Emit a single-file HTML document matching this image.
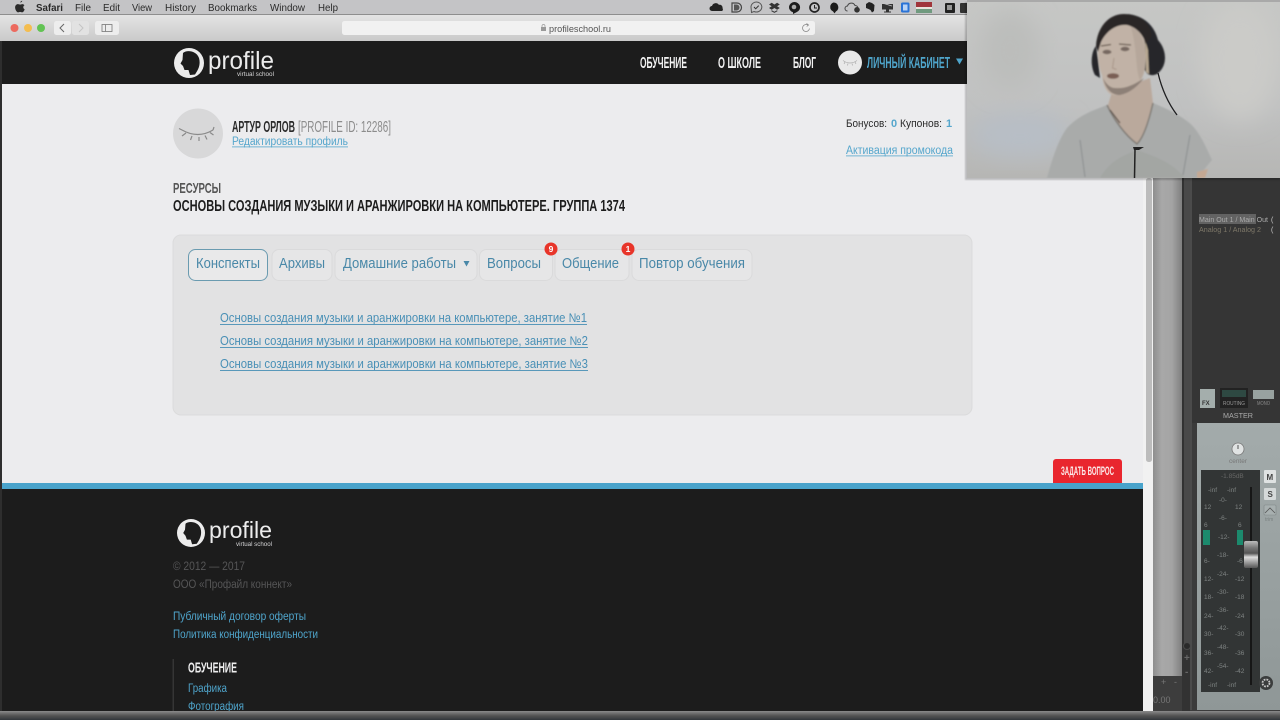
<!DOCTYPE html>
<html lang="ru">
<head>
<meta charset="utf-8">
<title>profileschool.ru</title>
<style>
html,body{margin:0;padding:0;width:1280px;height:720px;overflow:hidden;background:#3a3a3a}
svg{display:block;position:absolute;left:0;top:0}
text{font-family:"Liberation Sans",sans-serif}
</style>
</head>
<body>
<svg width="1280" height="720" viewBox="0 0 1280 720" xmlns="http://www.w3.org/2000/svg">
<defs>
<filter id="s" x="0" y="0" width="100%" height="100%"><feGaussianBlur stdDeviation="0.35"/></filter>
<filter id="b1" x="-20%" y="-20%" width="140%" height="140%"><feGaussianBlur stdDeviation="0.9"/></filter>
<filter id="b2" x="-30%" y="-30%" width="160%" height="160%"><feGaussianBlur stdDeviation="2.500"/></filter>
<filter id="b3" x="-30%" y="-30%" width="160%" height="160%"><feGaussianBlur stdDeviation="12"/></filter>
<linearGradient id="tb" x1="0" y1="0" x2="0" y2="1"><stop offset="0" stop-color="#e4e4e4"/><stop offset="1" stop-color="#c9c9c9"/></linearGradient>
<linearGradient id="col" x1="0" y1="0" x2="1" y2="0"><stop offset="0" stop-color="#8e8e8e"/><stop offset=".3" stop-color="#a8a8a8"/><stop offset=".65" stop-color="#a4a4a4"/><stop offset="1" stop-color="#7f7f7f"/></linearGradient>
<linearGradient id="wall" x1="0" y1="0" x2="0" y2="1"><stop offset="0" stop-color="#c6c7c5"/><stop offset=".6" stop-color="#c0c1c1"/><stop offset="1" stop-color="#b6b6b4"/></linearGradient>
<linearGradient id="panel" x1="0" y1="0" x2="0" y2="1"><stop offset="0" stop-color="#a3abab"/><stop offset="1" stop-color="#8f9797"/></linearGradient>
<linearGradient id="fad" x1="0" y1="0" x2="0" y2="1"><stop offset="0" stop-color="#bbb"/><stop offset=".25" stop-color="#777"/><stop offset=".45" stop-color="#555"/><stop offset=".6" stop-color="#ddd"/><stop offset="1" stop-color="#555"/></linearGradient>
<linearGradient id="bot" x1="0" y1="0" x2="0" y2="1"><stop offset="0" stop-color="#8b8b8b"/><stop offset=".5" stop-color="#555"/><stop offset="1" stop-color="#33373c"/></linearGradient>
<clipPath id="vid"><rect x="967" y="0" width="313" height="178"/></clipPath>
<clipPath id="foot"><rect x="0" y="489" width="1143" height="222"/></clipPath>
</defs>

<g filter="url(#s)">
<!-- desktop / mixer -->
<rect width="1280" height="720" fill="#3b3b3b"/>
<rect x="1153" y="178" width="29" height="498" fill="url(#col)"/>
<rect x="1153" y="676" width="29" height="36" fill="#3c3c3c"/>
<rect x="1182" y="178" width="8" height="534" fill="#333"/>
<rect x="1184" y="178" width="6" height="470" fill="#4a4a4a"/>
<rect x="1190" y="178" width="90" height="245" fill="#363636"/>
<rect x="1190" y="178" width="2" height="532" fill="#4c4c4c"/>
<rect x="1199" y="214" width="57" height="10" fill="#626262"/>
<text x="1199" y="222" font-size="7" fill="#aaa" textLength="69" lengthAdjust="spacingAndGlyphs">Main Out 1 / Main Out</text>
<text x="1199" y="232" font-size="7" fill="#7d7768" textLength="62" lengthAdjust="spacingAndGlyphs">Analog 1 / Analog 2</text>
<text x="1271" y="222" font-size="7" fill="#ccc">(</text>
<text x="1271" y="232" font-size="7" fill="#ccc">(</text>
<!-- channel buttons -->
<rect x="1200" y="389" width="15" height="19" fill="#a4aeac"/>
<text x="1202" y="405" font-size="6" font-weight="bold" fill="#333">FX</text>
<rect x="1220" y="388" width="28" height="20" fill="#222"/>
<rect x="1222" y="390" width="24" height="7" fill="#2f4a42"/>
<text x="1223" y="405" font-size="5" fill="#999" textLength="22" lengthAdjust="spacingAndGlyphs">ROUTING</text>
<rect x="1253" y="390" width="21" height="9" fill="#98a2a0"/>
<text x="1257" y="405" font-size="5" fill="#888" textLength="13" lengthAdjust="spacingAndGlyphs">MONO</text>
<text x="1223" y="418" font-size="7.5" fill="#aaa" textLength="30" lengthAdjust="spacingAndGlyphs">MASTER</text>
<!-- master panel -->
<rect x="1197" y="423" width="83" height="287" fill="url(#panel)"/>
<circle cx="1238" cy="449" r="6" fill="#e0e3e3" stroke="#777" stroke-width=".8"/>
<line x1="1238" y1="445" x2="1238" y2="449" stroke="#555"/>
<text x="1229" y="463" font-size="6.5" fill="#777" textLength="18" lengthAdjust="spacingAndGlyphs">center</text>
<rect x="1201" y="470" width="59" height="222" fill="#333635"/>
<rect x="1250" y="487" width="2" height="198" fill="#151515"/>
<rect x="1203" y="530" width="7" height="15" fill="#1f8a6d"/>
<rect x="1237" y="530" width="6" height="15" fill="#1f8a6d"/>
<rect x="1244" y="541" width="14" height="27" rx="2" fill="url(#fad)"/>
<g font-size="6.5" fill="#7d8282">
<text x="1221" y="478" fill="#666">-1.85dB</text>
<text x="1208" y="492">-inf</text><text x="1227" y="492">-inf</text>
<text x="1219" y="502">-0-</text>
<text x="1204" y="509">12</text><text x="1235" y="509">12</text>
<text x="1219" y="520">-6-</text>
<text x="1204" y="527">6</text><text x="1238" y="527">6</text>
<text x="1218" y="539">-12-</text>
<text x="1217" y="557">-18-</text>
<text x="1204" y="563">6-</text><text x="1237" y="563">-6</text>
<text x="1217" y="576">-24-</text>
<text x="1204" y="581">12-</text><text x="1235" y="581">-12</text>
<text x="1217" y="594">-30-</text>
<text x="1204" y="599">18-</text><text x="1235" y="599">-18</text>
<text x="1217" y="612">-36-</text>
<text x="1204" y="618">24-</text><text x="1235" y="618">-24</text>
<text x="1217" y="630">-42-</text>
<text x="1204" y="636">30-</text><text x="1235" y="636">-30</text>
<text x="1217" y="649">-48-</text>
<text x="1204" y="655">36-</text><text x="1235" y="655">-36</text>
<text x="1217" y="668">-54-</text>
<text x="1204" y="673">42-</text><text x="1235" y="673">-42</text>
<text x="1208" y="687">-inf</text><text x="1227" y="687">-inf</text>
</g>
<rect x="1264" y="470" width="12" height="13" rx="1" fill="#dfe2e2"/>
<text x="1266.500" y="480" font-size="8" font-weight="bold" fill="#444">M</text>
<rect x="1264" y="488" width="12" height="12" rx="1" fill="#d5d9d9"/>
<text x="1267.500" y="497" font-size="8" font-weight="bold" fill="#444">S</text>
<rect x="1264" y="505" width="12" height="10" rx="1" fill="#a8b0b0" stroke="#7f8686" stroke-width=".6"/>
<path d="M1265 513l3-3 2-2 2 2 3 3" stroke="#555" fill="none" stroke-width=".8"/>
<text x="1265" y="521" font-size="5" fill="#7b8282">trim</text>
<circle cx="1266" cy="683" r="7" fill="#3a3d3d"/>
<circle cx="1266" cy="683" r="3.500" fill="none" stroke="#c8c8c8" stroke-width="1.800" stroke-dasharray="1.800 1"/>
<text x="1153" y="703" font-size="9" fill="#777">0.00</text>
<text x="1161" y="685" font-size="9" fill="#777">+</text>
<text x="1174" y="685" font-size="9" fill="#777">-</text>
<circle cx="1187" cy="646" r="3.500" fill="#2b2b2b" stroke="#4a4a4a"/>
<text x="1184" y="661" font-size="10" font-weight="bold" fill="#666">+</text>
<text x="1185" y="675" font-size="10" font-weight="bold" fill="#666">-</text>

<!-- browser window -->
<rect x="1143" y="14" width="10" height="697" fill="#f1f1f1"/>
<rect x="1146" y="178" width="6" height="284" rx="2.500" fill="#bcbcbc"/>
<rect x="0" y="0" width="1280" height="14" fill="#c4c4c6"/>
<rect x="0" y="14" width="1153" height="27" fill="url(#tb)"/>
<rect x="0" y="14" width="1153" height="1" fill="#8e8e8e"/>

<!-- menu bar -->
<path d="M22.300 3.200c-.9.1-1.900.7-2.100 1.800.9.100 1.900-.7 2.100-1.800zM24.500 7.800c-.4-.6-1.200-1.200-2.100-1.200-1 0-1.500.5-2.200.5s-1.300-.5-2.200-.5c-1.500 0-2.900 1.200-2.900 3.300 0 2.300 1.700 5 3 5 .7 0 1-.5 2-.5s1.300.5 2 .5c1 0 2-1.500 2.600-3-1.700-.7-2-3.100-.2-4.100z" fill="#2a2a2a" transform="translate(0,-2.500)"/>
<g font-size="10" fill="#2b2b2b">
<text x="36" y="11" font-weight="bold" textLength="27" lengthAdjust="spacingAndGlyphs">Safari</text>
<text x="75" y="11" textLength="16" lengthAdjust="spacingAndGlyphs">File</text>
<text x="103" y="11" textLength="17" lengthAdjust="spacingAndGlyphs">Edit</text>
<text x="132" y="11" textLength="20" lengthAdjust="spacingAndGlyphs">View</text>
<text x="165" y="11" textLength="31" lengthAdjust="spacingAndGlyphs">History</text>
<text x="208" y="11" textLength="49" lengthAdjust="spacingAndGlyphs">Bookmarks</text>
<text x="270" y="11" textLength="35" lengthAdjust="spacingAndGlyphs">Window</text>
<text x="318" y="11" textLength="20" lengthAdjust="spacingAndGlyphs">Help</text>
</g>
<!-- status icons -->
<path d="M712 11a2.500 2.500 0 0 1 0-5 3.800 3.800 0 0 1 6.800-1.200 3 3 0 0 1 3.700 3.500 1.700 1.700 0 0 1-.5 2.700z" fill="#222"/>
<path d="M732 3h5a4.500 4.500 0 0 1 0 9h-5z" fill="none" stroke="#444" stroke-width="1.200"/><path d="M734 4.500h2.500a3 3 0 0 1 0 6H734z" fill="#555"/>
<path d="M751 7a5.400 5 0 1 1 3 4.500l-2.500 1z" fill="none" stroke="#555" stroke-width="1"/><path d="M754 7l1.700 1.800 3-3.200" stroke="#333" fill="none" stroke-width="1"/>
<path d="M769 4.500l2.700-1.800 2.700 1.800 2.700-1.800 2.700 1.800-2.700 1.800 2.700 1.700-2.700 1.800-2.700-1.800-2.700 1.800-2.700-1.800 2.700-1.700z" fill="#333"/>
<path d="M771.500 10.700l2.900 1.600 2.900-1.600" fill="none" stroke="#333"/>
<path d="M794 2a5.800 5.300 0 0 1 2.500 10.200L793 14v-1.700A5.800 5.300 0 0 1 794 2z" fill="#1d1d1d"/><circle cx="794" cy="7" r="2.300" fill="#aaa"/>
<circle cx="814.500" cy="7.500" r="4.500" fill="none" stroke="#222" stroke-width="1.700"/><path d="M814.500 5v3h2.500" stroke="#222" fill="none"/>
<path d="M833.500 2.500a4.800 4.800 0 0 1 2.500 8.900l-1.500 2-1.500-2a4.800 4.800 0 0 1 .5-8.900z" fill="#1d1d1d"/>
<path d="M847.500 11a2.500 2.500 0 0 1 0-5 4 4 0 0 1 7.500-.5 3 3 0 0 1 3 2.500" fill="none" stroke="#444" stroke-width="1"/><circle cx="857" cy="9.800" r="2.800" fill="#333"/>
<path d="M866 4l3-2 3 1 2.500 2-.5 6-2 1.500-1.500-2.500-2-1-2.500-1z" fill="#222"/>
<rect x="882" y="4" width="11" height="5.500" fill="#333"/><path d="M882 3l10 3" stroke="#c4c4c6" stroke-width=".8"/><rect x="886" y="9.500" width="3" height="2" fill="#333"/><rect x="884" y="11.500" width="7" height="1" fill="#333"/>
<rect x="901" y="2.500" width="8.500" height="10" rx="1.500" fill="#2c73d6"/><rect x="903" y="4.500" width="4.500" height="6" fill="#b9d3f5"/>
<rect x="916" y="2" width="16" height="5" fill="#a0353a"/><rect x="916" y="7" width="16" height="2" fill="#e9e4dc"/><rect x="916" y="9" width="16" height="4" fill="#6f9a7f"/>
<rect x="945" y="3" width="10" height="10" rx="1" fill="#222"/><rect x="947" y="5" width="5" height="5" fill="#999"/>
<rect x="960" y="3" width="8" height="10" rx="1" fill="#333"/>

<!-- toolbar -->
<circle cx="14.500" cy="28" r="4" fill="#ec6a5e"/>
<circle cx="28" cy="28" r="4" fill="#f4bd4f"/>
<circle cx="41" cy="28" r="4" fill="#62c353"/>
<rect x="54" y="21" width="17" height="14" rx="2.500" fill="#ededed"/>
<rect x="72" y="21" width="17" height="14" rx="2.500" fill="#e2e2e2"/>
<path d="M64 24l-4 4 4 4" fill="none" stroke="#666" stroke-width="1"/>
<path d="M79 24l4 4-4 4" fill="none" stroke="#c4c4c4" stroke-width="1"/>
<rect x="95" y="21" width="24" height="14" rx="2.500" fill="#ededed"/>
<rect x="102" y="24.500" width="10" height="7" fill="none" stroke="#777" stroke-width=".8"/>
<line x1="105.500" y1="24.500" x2="105.500" y2="31.500" stroke="#777" stroke-width=".8"/>
<rect x="342" y="21" width="473" height="14" rx="2.500" fill="#f1f1f1"/>
<rect x="541" y="27" width="5" height="4" fill="#999"/>
<path d="M542 27v-1a1.500 1.500 0 0 1 3 0v1" fill="none" stroke="#999" stroke-width=".7"/>
<text x="549" y="32" font-size="9.500" fill="#555" textLength="62" lengthAdjust="spacingAndGlyphs">profileschool.ru</text>
<path d="M809.500 28.500a3.500 3.500 0 1 1-1.500-3.400" fill="none" stroke="#888" stroke-width=".8"/><path d="M806.500 23.500l2 1.500-1.800 1.500" fill="none" stroke="#888" stroke-width=".8"/>

<!-- page content -->
<rect x="0" y="41" width="2" height="670" fill="#2d2d2d"/>
<rect x="2" y="41" width="1141" height="43" fill="#1c1c1d"/>
<rect x="2" y="84" width="1141" height="399" fill="#ececee"/>
<rect x="2" y="483" width="1141" height="6" fill="#4aa3cb"/>
<rect x="2" y="489" width="1141" height="222" fill="#1c1c1e"/>
<rect x="0" y="711" width="1280" height="9" fill="url(#bot)"/>

<!-- header logo -->
<circle cx="189" cy="63" r="15" fill="#ececec"/>
<path d="M183 53C186 50 196 50 199 58C201 65 198 70 195 74.500L190 75L188.500 70L184.500 70L183 66L180.500 63.500L182.500 60Z" fill="#1c1c1d"/>
<text x="208" y="69" font-size="25" fill="#ececec" textLength="66" lengthAdjust="spacingAndGlyphs">profile</text>
<text x="237" y="76" font-size="6.500" fill="#d5d5d5" textLength="37" lengthAdjust="spacingAndGlyphs">virtual school</text>

<!-- nav -->
<g font-size="15.500" font-weight="bold" fill="#f2f2f2">
<text x="640" y="68" textLength="47" lengthAdjust="spacingAndGlyphs">ОБУЧЕНИЕ</text>
<text x="718" y="68" textLength="43" lengthAdjust="spacingAndGlyphs">О ШКОЛЕ</text>
<text x="793" y="68" textLength="23" lengthAdjust="spacingAndGlyphs">БЛОГ</text>
<text x="867" y="68" fill="#4fa5cb" textLength="83" lengthAdjust="spacingAndGlyphs">ЛИЧНЫЙ КАБИНЕТ</text>
</g>
<circle cx="850" cy="62.500" r="12" fill="#e9e9e9"/>
<path d="M843 60.500q7 5 14 0M845 62l-1 2M848 63.500l-.5 2M852 63.500l.5 2M855 62l1 2" fill="none" stroke="#aaa" stroke-width=".7"/>
<path d="M956 58.500h7l-3.500 6z" fill="#4fa5cb"/>

<!-- profile -->
<circle cx="198" cy="133.500" r="25" fill="#d8d8d9"/>
<path d="M182 130q16 9 31 0M182 130l-3-1.500M186 133l-4 3M192 136l-1.500 4M199 137v4M205 135.500l2 4M210 132.500l3.500 2.500M213 130l1-3" fill="none" stroke="#8a8a8a" stroke-width="1.200"/>
<text x="232" y="132" font-size="15.500" font-weight="bold" fill="#2a2a2a" textLength="63" lengthAdjust="spacingAndGlyphs">АРТУР ОРЛОВ</text>
<text x="298" y="132" font-size="15.500" fill="#8c8c8c" textLength="93" lengthAdjust="spacingAndGlyphs">[PROFILE ID: 12286]</text>
<text x="232" y="145" font-size="11.500" fill="#55a6cc" textLength="116" lengthAdjust="spacingAndGlyphs">Редактировать профиль</text>
<rect x="232" y="146.500" width="116" height=".8" fill="#55a6cc"/>

<g font-size="11" fill="#2a2a2a">
<text x="846" y="127" textLength="41" lengthAdjust="spacingAndGlyphs">Бонусов:</text>
<text x="891" y="127" fill="#55a6cc" font-weight="bold">0</text>
<text x="900" y="127" textLength="42" lengthAdjust="spacingAndGlyphs">Купонов:</text>
<text x="946" y="127" fill="#55a6cc" font-weight="bold">1</text>
</g>
<text x="846" y="154" font-size="11.500" fill="#55a6cc" textLength="107" lengthAdjust="spacingAndGlyphs">Активация промокода</text>
<rect x="846" y="155.500" width="107" height=".8" fill="#55a6cc"/>

<text x="173" y="193" font-size="15" font-weight="bold" fill="#555" textLength="48" lengthAdjust="spacingAndGlyphs">РЕСУРСЫ</text>
<text x="173" y="211" font-size="16" font-weight="bold" fill="#1c1c1c" textLength="452" lengthAdjust="spacingAndGlyphs">ОСНОВЫ СОЗДАНИЯ МУЗЫКИ И АРАНЖИРОВКИ НА КОМПЬЮТЕРЕ. ГРУППА 1374</text>

<!-- panel -->
<rect x="173" y="235" width="799" height="180" rx="8" fill="#e2e2e3" stroke="#dbdbdc"/>
<g fill="#e6e6e7" stroke="#dadadb">
<rect x="272" y="249.500" width="60" height="31" rx="7"/>
<rect x="335" y="249.500" width="142" height="31" rx="7"/>
<rect x="479.500" y="249.500" width="73" height="31" rx="7"/>
<rect x="555" y="249.500" width="74" height="31" rx="7"/>
<rect x="632" y="249.500" width="120" height="31" rx="7"/>
</g>
<rect x="188.500" y="249.500" width="79" height="31" rx="7" fill="#e9e9ea" stroke="#6b9bb0"/>
<g font-size="14.500" fill="#4a88a8">
<text x="196" y="268" textLength="64" lengthAdjust="spacingAndGlyphs">Конспекты</text>
<text x="279" y="268" textLength="46" lengthAdjust="spacingAndGlyphs">Архивы</text>
<text x="343" y="268" textLength="113" lengthAdjust="spacingAndGlyphs">Домашние работы</text>
<text x="487" y="268" textLength="54" lengthAdjust="spacingAndGlyphs">Вопросы</text>
<text x="562" y="268" textLength="57" lengthAdjust="spacingAndGlyphs">Общение</text>
<text x="639" y="268" textLength="106" lengthAdjust="spacingAndGlyphs">Повтор обучения</text>
</g>
<path d="M463.500 261h6l-3 5.500z" fill="#4a88a8"/>
<circle cx="551" cy="249" r="6.500" fill="#e8342a"/>
<text x="551" y="252" font-size="8.500" font-weight="bold" fill="#fff" text-anchor="middle">9</text>
<circle cx="628" cy="249" r="6.500" fill="#e8342a"/>
<text x="628" y="252" font-size="8.500" font-weight="bold" fill="#fff" text-anchor="middle">1</text>

<g font-size="12.500" fill="#4a90b6">
<text x="220" y="322" textLength="367" lengthAdjust="spacingAndGlyphs">Основы создания музыки и аранжировки на компьютере, занятие №1</text>
<text x="220" y="345" textLength="368" lengthAdjust="spacingAndGlyphs">Основы создания музыки и аранжировки на компьютере, занятие №2</text>
<text x="220" y="368" textLength="368" lengthAdjust="spacingAndGlyphs">Основы создания музыки и аранжировки на компьютере, занятие №3</text>
<rect x="220" y="324" width="367" height=".9"/>
<rect x="220" y="347" width="368" height=".9"/>
<rect x="220" y="370" width="368" height=".9"/>
</g>

<!-- ask button -->
<path d="M1053 483v-21a3 3 0 0 1 3-3h63a3 3 0 0 1 3 3v21z" fill="#e9262e"/>
<text x="1061" y="475" font-size="12" font-weight="bold" fill="#fbeaea" textLength="53" lengthAdjust="spacingAndGlyphs">ЗАДАТЬ ВОПРОС</text>

<!-- footer -->
<g clip-path="url(#foot)">
<circle cx="191" cy="533" r="14" fill="#ececec"/>
<path d="M185.500 523.700C188.300 520.900 197.700 520.900 200.500 528.300C202.400 534.900 199.600 539.600 196.800 543.800L192.100 544.300L190.700 539.600L186.900 539.600L185.500 535.800L183.200 533L185 529.800Z" fill="#1c1c1e"/>
<text x="209" y="538" font-size="23.500" fill="#ececec" textLength="63" lengthAdjust="spacingAndGlyphs">profile</text>
<text x="236" y="546" font-size="6.500" fill="#d5d5d5" textLength="36" lengthAdjust="spacingAndGlyphs">virtual school</text>
<g font-size="11.500" fill="#565656">
<text x="173" y="570" textLength="72" lengthAdjust="spacingAndGlyphs">© 2012 — 2017</text>
<text x="173" y="588" textLength="119" lengthAdjust="spacingAndGlyphs">ООО «Профайл коннект»</text>
</g>
<g font-size="11.500" fill="#4fa5cb">
<text x="173" y="620" textLength="133" lengthAdjust="spacingAndGlyphs">Публичный договор оферты</text>
<text x="173" y="638" textLength="145" lengthAdjust="spacingAndGlyphs">Политика конфиденциальности</text>
<text x="188" y="692" textLength="39" lengthAdjust="spacingAndGlyphs">Графика</text>
<text x="188" y="710" textLength="56" lengthAdjust="spacingAndGlyphs">Фотография</text>
</g>
<rect x="172.500" y="659" width="1.500" height="52" fill="#343434"/>
<text x="188" y="672.500" font-size="15" font-weight="bold" fill="#eee" textLength="49" lengthAdjust="spacingAndGlyphs">ОБУЧЕНИЕ</text>
</g>
</g>

<!-- webcam overlay -->
<rect x="965" y="2" width="315" height="178" fill="#000" opacity=".2" filter="url(#b1)"/>
<g clip-path="url(#vid)">
<rect x="967" y="0" width="313" height="178" fill="url(#wall)"/>
<ellipse cx="1020" cy="135" rx="50" ry="22" fill="#b7bec6" filter="url(#b3)"/>
<ellipse cx="1240" cy="60" rx="40" ry="60" fill="#cbcbc8" filter="url(#b3)"/>
<ellipse cx="1010" cy="50" rx="30" ry="40" fill="#bcbdbb" filter="url(#b3)"/>
<rect x="967" y="0" width="313" height="2" fill="#a9a9a9"/>
<g filter="url(#b1)">
<!-- shirt -->
<path d="M1107 105C1095 110 1080 114 1067 128C1058 140 1052 160 1047 178H1200C1202 172 1205 168 1212 160C1205 145 1199 130 1187 121C1176 113 1165 108 1153 103C1148 125 1143 138 1137 144C1125 135 1114 120 1107 105Z" fill="#a9abaa"/>
<path d="M1100 178C1110 160 1125 155 1137 150C1150 155 1170 160 1185 178Z" fill="#a3a6a3"/>
<!-- neck -->
<path d="M1108 105C1114 120 1125 135 1137 144C1143 138 1148 125 1153 103L1150 78L1112 92Z" fill="#baa99c"/>
<path d="M1197 178L1197 172L1208 169L1205 178Z" fill="#c4a893"/>
<!-- ear cup right & band -->
<path d="M1128 14C1143 16 1154 24 1158 40C1167 50 1168 66 1157 74C1150 77 1146 74 1144 68C1148 42 1142 25 1128 14Z" fill="#26282c"/>
<!-- left cup -->
<path d="M1096 46C1091 52 1090 66 1095 75L1100 78L1098 60Z" fill="#25272b"/>
<!-- face -->
<path d="M1098 46C1098 32 1108 24 1122 24C1136 24 1144 30 1145 45C1146 62 1146 72 1141 80C1133 89 1124 96 1113 95C1106 93 1103 85 1102 75C1099 68 1098 58 1098 46Z" fill="#c1b2a6"/>
<path d="M1130 24C1140 30 1145 40 1145 55C1145 68 1144 76 1140 80C1135 70 1138 50 1130 24Z" fill="#b3a498" opacity=".8"/>
<path d="M1103 78C1106 90 1112 95 1120 95C1130 93 1138 86 1144 78C1134 85 1125 89 1115 88C1110 88 1106 84 1103 78Z" fill="#8d8077"/>
<path d="M1145 40L1146 72L1149 74L1148 50Z" fill="#b8a892"/>
<!-- hair -->
<path d="M1096 46C1097 28 1108 14 1124 14C1138 14 1150 22 1152 36L1146 44C1143 34 1136 27 1127 25C1117 24 1107 30 1101 42L1098 52Z" fill="#2a2728"/>
<!-- features -->
<ellipse cx="1107" cy="52" rx="4.500" ry="2.200" fill="#766860"/>
<ellipse cx="1125" cy="49" rx="4.500" ry="2.200" fill="#766860"/>
<path d="M1101 46l10-1.500M1119 44l12 1" stroke="#675a50" stroke-width="1.200" fill="none"/>
<ellipse cx="1113" cy="76" rx="6" ry="2.800" fill="#7a5f55"/>
<path d="M1114 58l-1.500 10 4 1.500" stroke="#a89689" fill="none"/>
<!-- collar shade -->
<path d="M1107 105C1114 120 1125 135 1137 144C1143 138 1148 125 1153 103" fill="none" stroke="#807c76" stroke-width="1.500"/>
<path d="M1110 110L1120 123" stroke="#5a5048" stroke-width="1.200"/>
<path d="M1080 140l5 37M1190 135l-7 40" stroke="#8a8d8e" stroke-width="1" fill="none"/>
</g>
<path d="M1158 73C1162 90 1168 103 1177 115" fill="none" stroke="#1e1e20" stroke-width="1.300"/>
<path d="M1135 149L1134.500 178" stroke="#222" stroke-width="1.500"/>
<path d="M1133 147h11l-5 3h-5z" fill="#222"/>
</g>
</svg>
</body>
</html>
